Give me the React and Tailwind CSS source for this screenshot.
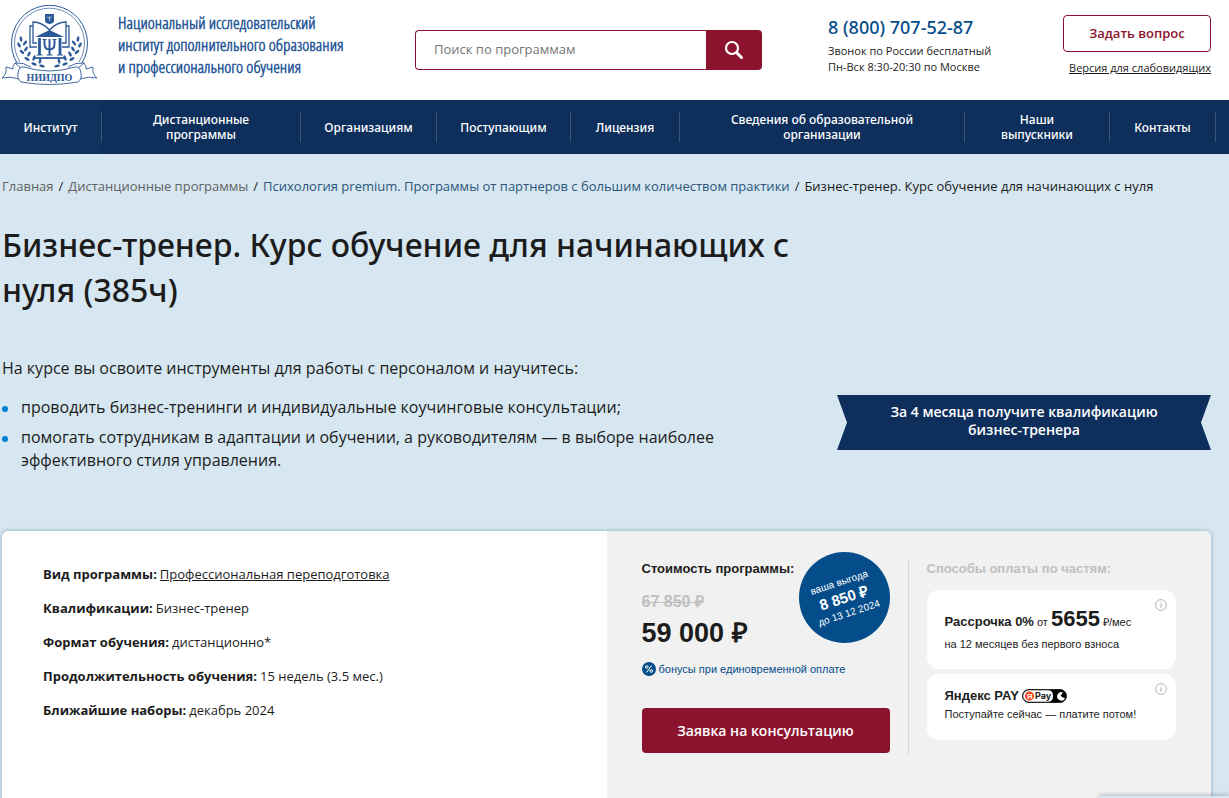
import React from 'react'

const navItems = [
    { title: 'Институт', width: 'w-[102px]', active: true },
    { title: 'Дистанционные программы', width: 'w-[199px]' },
    { title: 'Организациям', width: 'w-[136px]' },
    { title: 'Поступающим', width: 'w-[134px]' },
    { title: 'Лицензия', width: 'w-[109px]' },
    { title: 'Сведения об образовательной организации', width: 'w-[285px]' },
    { title: 'Наши выпускники', width: 'w-[145px]' },
    { title: 'Контакты', width: 'w-[106px]' },
]

const details = [
    { label: 'Вид программы:', value: 'Профессиональная переподготовка', link: true },
    { label: 'Квалификации:', value: 'Бизнес-тренер' },
    { label: 'Формат обучения:', value: 'дистанционно*' },
    { label: 'Продолжительность обучения:', value: '15 недель (3.5 мес.)' },
    { label: 'Ближайшие наборы:', value: 'декабрь 2024' },
]

// laurel leaves, the left branch is mirrored for the right one
const leaves = [
    [21, 39, -10], [25, 43, 40], [19, 45, -30], [26, 49, 35], [22, 52, -50],
    [29, 54, 30], [27, 59, -60], [34, 58, 20], [34, 64, -70], [40, 61, 10], [42, 66, -80],
]

const Emblem = () => (
    <svg viewBox="0 0 100 90" className="h-[90px] w-[100px] shrink-0" fill="none" stroke="#2c5a98" aria-hidden="true">
        <path d="M17 63A38 38 0 1 1 82 63" strokeWidth="1" />
        <path d="M20 62A35 35 0 1 1 79 62" strokeWidth="0.7" />
        <path d="M45 14h9v7q0 2-4.500 3q-4.500-1-4.500-3z" fill="#2c5a98" stroke="none" />
        <path d="M47 17l2.500 1.500L52 17M49.500 16v5" stroke="#b9cbe2" strokeWidth="0.8" />
        <path d="M49.500 30Q42 22 33 22V43h4M49.500 30Q57 22 66 22V43h-4M33 26h-3v21h7M66 26h3v21h-7" strokeWidth="1.300" />
        <path d="M35 37L49.500 30L64 37z" fill="#2c5a98" stroke="none" />
        <path d="M39.500 38v17M60 38v17" strokeWidth="2.800" />
        <path d="M44.500 39.500v4q0 6 5 6t5-6v-4M49.500 39v16" strokeWidth="2" />
        <path d="M42.500 39.500h4M52.500 39.500h4M46.500 55h6M36.500 55h6M57 55h6" strokeWidth="1" />
        <path d="M35 58h29" strokeWidth="1.800" />
        {[false, true].map((mirrored) => (
            <g key={String(mirrored)} transform={mirrored ? 'translate(99 0) scale(-1 1)' : undefined} fill="#2c5a98" stroke="none">
                {leaves.map(([x, y, angle]) => (
                    <ellipse key={`${x}-${y}`} cx={x} cy={y} rx="1.300" ry="2.800" transform={`rotate(${angle} ${x} ${y})`} />
                ))}
                <path d="M22 69L15 63Q12 67 13 69L6 67Q7 74 2 78Q11 76 19 79" fill="#fff" stroke="#2c5a98" strokeWidth="0.9" />
                <path d="M15 63Q23 62 31 67" fill="none" stroke="#2c5a98" strokeWidth="0.9" />
            </g>
        ))}
        <path d="M24 67Q49.500 75 75 67Q80 66 81 73Q82 79 78 82Q49.500 87 21 82Q17 79 18 73Q19 66 24 67z" fill="#fff" strokeWidth="0.9" />
        <text x="49.500" y="81" textAnchor="middle" fill="#2c5a98" stroke="none" className="font-['Liberation_Serif',serif] text-[10px] font-bold">НИИДПО</text>
    </svg>
)

const InfoButton = () => (
    <button type="button" aria-label="Подробнее" className="absolute right-[9px] top-[9px] text-[#b5b5b5]">
        <svg viewBox="0 0 12 12" className="size-3" fill="none" stroke="currentColor">
            <circle cx="6" cy="6" r="5.400" />
            <path d="M6 3.500v1M6 5.200v3.300" strokeWidth="1.300" />
        </svg>
    </button>
)

const YandexPay = () => (
    <svg viewBox="0 0 46 15" className="h-[15px] w-[46px]" role="img" aria-label="Яндекс Pay">
        <rect x="0.500" y="0.500" width="44" height="13" rx="6.500" fill="#000" stroke="#222" />
        <path d="M7 1.200h19q5 0 5 5.800t-5 5.800H7A5.800 5.800 0 0 1 7 1.200z" fill="#fff" />
        <circle cx="7.500" cy="7" r="4.500" fill="#fc3f1d" />
        <text x="7.500" y="10" textAnchor="middle" fill="#fff" className="font-['Liberation_Sans',sans-serif] text-[8px] font-bold">Я</text>
        <text x="13" y="10" fill="#222" className="font-['Inter',sans-serif] text-[9px] font-bold">Pay</text>
        <path d="M41 3.500A4.200 4.200 0 1 0 43 9.500L38.500 7z" fill="#fff" />
    </svg>
)

const Header = () => (
    <header className="flex h-[100px] bg-white">
        <a href="#" className="flex w-[415px] shrink-0">
            <Emblem />
            <span className="mt-3 ml-[18px] font-['Open_Sans_Condensed_Light','Open_Sans_Condensed','Open_Sans',sans-serif] text-[17px] leading-[22px] font-semibold whitespace-nowrap text-[#2c5a98]">
                Национальный исследовательский<br />
                институт дополнительного образования<br />
                и профессионального обучения
            </span>
        </a>
        <form className="mt-[30px] flex h-10 w-[347px] shrink-0" role="search">
            <input
                type="search"
                aria-label="Поиск по программам"
                placeholder="Поиск по программам"
                className="min-w-0 flex-1 rounded-l border border-r-0 border-[#8c132d] px-[18px] text-[13px] placeholder:text-[#757575]"
            />
            <button type="button" aria-label="Найти" className="flex w-14 items-center justify-center rounded-r bg-[#8c132d]">
                <svg viewBox="0 0 20 20" className="size-5" fill="none" stroke="#fff" strokeLinecap="round">
                    <circle cx="8" cy="8" r="6" strokeWidth="2.200" />
                    <path d="M12.500 12.500l5 5" strokeWidth="3" />
                </svg>
            </button>
        </form>
        <div className="mt-[15px] ml-[66px] shrink-0 text-[11px] leading-4">
            <a href="tel:88007075287" className="block font-['Noto_Sans','Open_Sans',sans-serif] text-[18px] leading-6 font-medium text-[#044c8a]">8 (800) 707-52-87</a>
            <p className="mt-1">Звонок по России бесплатный</p>
            <p>Пн-Вск 8:30-20:30 по Москве</p>
        </div>
        <div className="mt-[15px] mr-[18px] ml-auto flex flex-col items-end">
            <button type="button" className="h-[37px] w-[148px] rounded border border-[#8c132d] text-[13px] font-semibold text-[#8c132d]">Задать вопрос</button>
            <a href="#" className="mt-2 text-[11px] leading-4 whitespace-nowrap underline">Версия для слабовидящих</a>
        </div>
    </header>
)

const Nav = () => (
    <nav className="flex h-[54px] bg-[#0e2f5c] font-['Noto_Sans','Open_Sans',sans-serif] text-xs leading-[15px] font-medium text-white">
        {navItems.map((item) => (
            <a
                key={item.title}
                href="#"
                className={`${item.width} ${item.active ? 'bg-[#0e335f]' : ''} flex items-center`}
            >
                <span className="flex h-[30px] flex-1 items-center justify-center border-r border-[#385478] px-5 text-center">
                    <span className="max-w-[200px]">{item.title}</span>
                </span>
            </a>
        ))}
    </nav>
)

const Intro = () => (
    <section className="mt-[26px] mr-[18px] ml-[2px] flex items-end justify-between">
        <div className="w-[800px]">
            <h1 className="font-['Noto_Sans','Open_Sans',sans-serif] text-[32px] leading-[45px] font-medium">Бизнес-тренер. Курс обучение для начинающих с нуля (385ч)</h1>
            <div className="mt-[45px] w-[730px] text-base leading-[23px]">
                <p>На курсе вы освоите инструменты для работы с персоналом и научитесь:</p>
                <ul className="mt-4 space-y-[7px]">
                    {[
                        'проводить бизнес-тренинги и индивидуальные коучинговые консультации;',
                        'помогать сотрудникам в адаптации и обучении, а руководителям — в выборе наиболее эффективного стиля управления.',
                    ].map((text) => (
                        <li key={text} className="flex">
                            <span className="mt-[10px] mr-[13px] size-[6px] shrink-0 rounded-full bg-[#0080d0]" />
                            {text}
                        </li>
                    ))}
                </ul>
            </div>
        </div>
        <p className="mb-[22px] flex h-[55px] w-[374px] shrink-0 items-center justify-center bg-[#0e2f5c] px-10 pb-[3px] text-center text-sm leading-[18px] font-semibold text-white [clip-path:polygon(0_0,100%_0,calc(100%-10px)_50%,100%_100%,0_100%,10px_50%)]">
            За 4 месяца получите квалификацию бизнес-тренера
        </p>
    </section>
)

const Price = () => (
    <div className="relative w-[248px] shrink-0 font-['Liberation_Sans',sans-serif]">
        <h2 className="text-[13px] leading-4 font-bold">Стоимость программы:</h2>
        <p className="mt-[15px] text-base leading-5 font-bold text-[#c0c0c0] line-through">67 850 ₽</p>
        <p className="mt-[5px] text-[27px] leading-8 font-bold">59 000 ₽</p>
        <a href="#" className="mt-3 flex items-center gap-[3px] text-[11px] leading-4 whitespace-nowrap text-[#044c8a]">
            <svg viewBox="0 0 14 14" className="size-[14px]" fill="none" stroke="#fff">
                <circle cx="7" cy="7" r="7" fill="#044c8a" stroke="none" />
                <circle cx="4.800" cy="5" r="1.300" />
                <circle cx="9.200" cy="9" r="1.300" />
                <path d="M9.500 3.500l-5 7" />
            </svg>
            бонусы при единовременной оплате
        </a>
        <button type="button" className="mt-[31px] h-[45px] w-full rounded bg-[#8c132d] font-['Open_Sans',sans-serif] text-sm font-semibold text-white">
            Заявка на консультацию
        </button>
        <div className="absolute -top-[9px] right-0 flex size-[91px] items-center justify-center rounded-full bg-[#044c8a] text-center text-white">
            <div className="-rotate-[18deg] text-[10px] leading-4 whitespace-nowrap">
                <p>ваша выгода</p>
                <p className="text-[15px] leading-4 font-bold">8 850 ₽</p>
                <p>до 13 12 2024</p>
            </div>
        </div>
    </div>
)

const Payments = () => (
    <div className="ml-[18px] h-[193px] flex-1 border-l border-dotted border-[#bbb] pl-[18px] font-['Liberation_Sans',sans-serif]">
        <h2 className="text-[13px] leading-4 font-bold text-[#c0c0c0]">Способы оплаты по частям:</h2>
        <div className="relative mt-[13px] h-[79px] rounded-xl bg-white px-[18px] pt-[15px] text-[11px]">
            <InfoButton />
            <p className="leading-7"><b className="text-[13px]">Рассрочка 0%</b> от <b className="text-[22px]">5655</b> ₽/мес</p>
            <p className="leading-4">на 12 месяцев без первого взноса</p>
        </div>
        <div className="relative mt-[5px] h-[66px] rounded-xl bg-white px-[18px] pt-3 text-[11px]">
            <InfoButton />
            <p className="flex items-center gap-[3px] leading-5"><b className="text-[13px] leading-5">Яндекс PAY</b><YandexPay /></p>
            <p className="leading-4">Поступайте сейчас — платите потом!</p>
        </div>
    </div>
)

const App = () => {
    return (
        <div className="h-screen overflow-hidden bg-[#d6e7f1] font-['Open_Sans',sans-serif] text-[#1c1c1c]">
            <Header />
            <Nav />
            <main>
                <div className="mt-[22px] ml-[2px] flex gap-[5px] text-[13px] leading-5 whitespace-nowrap">
                    <a href="#" className="text-[#626262]">Главная</a>
                    <span>/</span>
                    <a href="#" className="text-[#626262]">Дистанционные программы</a>
                    <span>/</span>
                    <a href="#" className="text-[#2d557b]">Психология premium. Программы от партнеров с большим количеством практики</a>
                    <span>/</span>
                    <span>Бизнес-тренер. Курс обучение для начинающих с нуля</span>
                </div>
                <Intro />
                <section className="mt-[59px] mr-[18px] ml-[2px] flex h-[320px] overflow-hidden rounded-md bg-white shadow-[0_0_4px_rgba(0,40,90,0.35)]">
                    <dl className="w-1/2 space-y-[14px] px-[41px] pt-[33px] text-[13px] leading-5">
                        {details.map((item) => (
                            <div key={item.label} className="flex gap-[3px]">
                                <dt className="font-bold">{item.label}</dt>
                                <dd>{item.link ? <a href="#" className="underline">{item.value}</a> : item.value}</dd>
                            </div>
                        ))}
                    </dl>
                    <div className="flex w-1/2 items-start bg-[#f1f1f1] px-[35px] pt-[30px]">
                        <Price />
                        <Payments />
                    </div>
                </section>
            </main>
            <div className="fixed right-0 bottom-0 h-[2px] w-[130px] rounded-tl-lg bg-[#d6e7f1] shadow-[0_0_5px_rgba(0,0,0,0.5)]" />
        </div>
    )
}

export default App
